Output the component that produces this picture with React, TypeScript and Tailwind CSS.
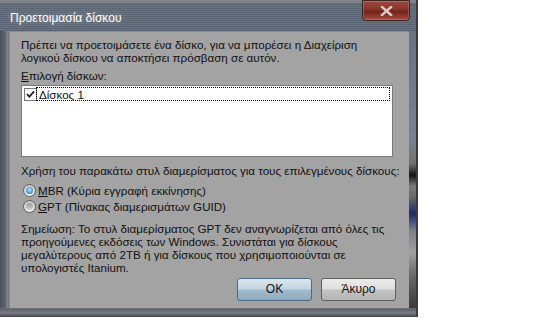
import React from "react";

function Checkbox() {
  return (
    <span className="flex h-[13px] w-[13px] shrink-0 items-center justify-center border border-[#7a7a7a] bg-white">
      <svg width="9" height="9" viewBox="0 0 9 9">
        <path d="M1 4.2 L3.4 6.8 L8 1.4" fill="none" stroke="#1a1a1a" strokeWidth="1.7" />
      </svg>
    </span>
  );
}

function Radio({ on }: { on?: boolean }) {
  return (
    <span className="flex h-[13px] w-[13px] shrink-0 items-center justify-center rounded-full border border-[#5e5e5e] bg-[linear-gradient(180deg,#c8c8c8,#f0f0f0)]">
      {on ? (
        <span className="h-[7px] w-[7px] rounded-full bg-[radial-gradient(circle_at_50%_40%,#b8e4fb_0%,#4a9ad0_60%,#1f5a88_100%)]" />
      ) : (
        <span className="h-[7px] w-[7px] rounded-full bg-[linear-gradient(180deg,#9a9a9a,#d4d4d4)]" />
      )}
    </span>
  );
}

function Button({ label, primary }: { label: string; primary?: boolean }) {
  return (
    <div
      className={
        primary
          ? "flex h-[23px] w-[75px] items-center justify-center rounded-[3px] border border-[#4c6a84] bg-[linear-gradient(180deg,#dae6ee_0%,#c3d5e2_48%,#a2bacd_52%,#8faabf_100%)] text-[12px] text-[#111]"
          : "flex h-[23px] w-[75px] items-center justify-center rounded-[3px] border border-[#5e5e5e] bg-[linear-gradient(180deg,#ececec_0%,#dedede_48%,#c4c4c4_52%,#b4b4b4_100%)] text-[12px] text-[#111]"
      }
    >
      {label}
    </div>
  );
}

export default function App() {
  return (
    <div className="flex h-[318px] w-[552px] overflow-hidden bg-white font-['Liberation_Sans',Arial,sans-serif] text-[11.6px] leading-[13px] text-[#111]">
      <div className="flex h-[317px] w-[418px] flex-col border-r-2 border-[#3a3d42] bg-[repeating-linear-gradient(180deg,#5c6573_0px,#5c6573_1px,#687180_1px,#687180_2px)]">
        {/* title bar */}
        <div className="relative flex h-[31px] shrink-0 items-start border-t-[3px] border-[#7e838a] pl-[10px] pt-[8px]">
          <span className="text-[12px] leading-[14px] text-white [text-shadow:0_0_6px_rgba(255,255,255,0.35)]">
            Προετοιμασία δίσκου
          </span>
          <div className="absolute right-[6px] top-[-3px] flex h-[21px] w-[48px] items-center justify-center rounded-b-[4px] border border-[#3b2320] bg-[linear-gradient(180deg,#9c4a40_0%,#8a3228_45%,#70241c_55%,#a84a3c_100%)] shadow-[inset_0_0_0_1px_rgba(255,200,190,0.25)]">
            <svg width="13" height="10" viewBox="0 0 13 10">
              <path d="M2 1 L11 9 M11 1 L2 9" stroke="#d9cccc" strokeWidth="2.4" strokeLinecap="square" />
            </svg>
          </div>
        </div>

        <div className="flex min-h-0 flex-1">
          <div className="w-[9px] shrink-0 bg-[linear-gradient(90deg,#4a4f56,#626870_60%,#8a8e94_90%,#55595f)]" />
          {/* panel */}
          <div className="flex min-w-0 flex-1 flex-col overflow-hidden whitespace-nowrap border-l border-t border-[#8c8c8c] bg-[#a3a3a3] pl-[11px] pr-[13px] pt-[6px]">
            <p>
              Πρέπει να προετοιμάσετε ένα δίσκο, για να μπορέσει η Διαχείριση
              <br />
              λογικού δίσκου να αποκτήσει πρόσβαση σε αυτόν.
            </p>
            <p className="mt-[5px]">
              <span className="underline">Ε</span>πιλογή δίσκων:
            </p>
            <div className="mr-[3px] mt-[3px] h-[72px] border border-[#7a7a7a] bg-white pl-[2px] pr-[2px] pt-[1px]">
              <div className="flex h-[14px] items-center">
                <Checkbox />
                <span className="ml-[-1px] flex h-[14px] flex-1 items-center border border-dotted border-black pl-[2px]">
                  Δίσκος 1
                </span>
              </div>
            </div>
            <p className="mt-[7px]">Χρήση του παρακάτω στυλ διαμερίσματος για τους επιλεγμένους δίσκους:</p>
            <div className="mt-[5px] flex h-[16px] items-center gap-[2px] pl-[2px]">
              <Radio on />
              <span>
                <span className="underline">M</span>BR (Κύρια εγγραφή εκκίνησης)
              </span>
            </div>
            <div className="flex h-[16px] items-center gap-[2px] pl-[2px]">
              <Radio />
              <span>
                <span className="underline">G</span>PT (Πίνακας διαμερισμάτων GUID)
              </span>
            </div>
            <p className="mt-[8px]">
              Σημείωση: Το στυλ διαμερίσματος GPT δεν αναγνωρίζεται από όλες τις
              <br />
              προηγούμενες εκδόσεις των Windows. Συνιστάται για δίσκους
              <br />
              μεγαλύτερους από 2TB ή για δίσκους που χρησιμοποιούνται σε
              <br />
              υπολογιστές Itanium.
            </p>
            <div className="mt-[4px] flex justify-end gap-[9px]">
              <Button label="OK" primary />
              <Button label="Άκυρο" />
            </div>
          </div>
          <div className="w-[7px] shrink-0 bg-[linear-gradient(180deg,#6a7280_0%,#7a828e_40%,#707070_48%,#141414_52%,#7a7a7a_56%,#6a6a6a_60%,#1a2a6a_66%,#7a7f88_72%,#a0a0a0_80%,#6a6a6a_88%,#3a3a3a_100%)]" />
        </div>
        <div className="h-[9px] shrink-0 border-t border-[#6c6c6c] bg-[linear-gradient(180deg,#5e6268,#7a7e84_50%,#3e4248)]" />
      </div>
    </div>
  );
}
